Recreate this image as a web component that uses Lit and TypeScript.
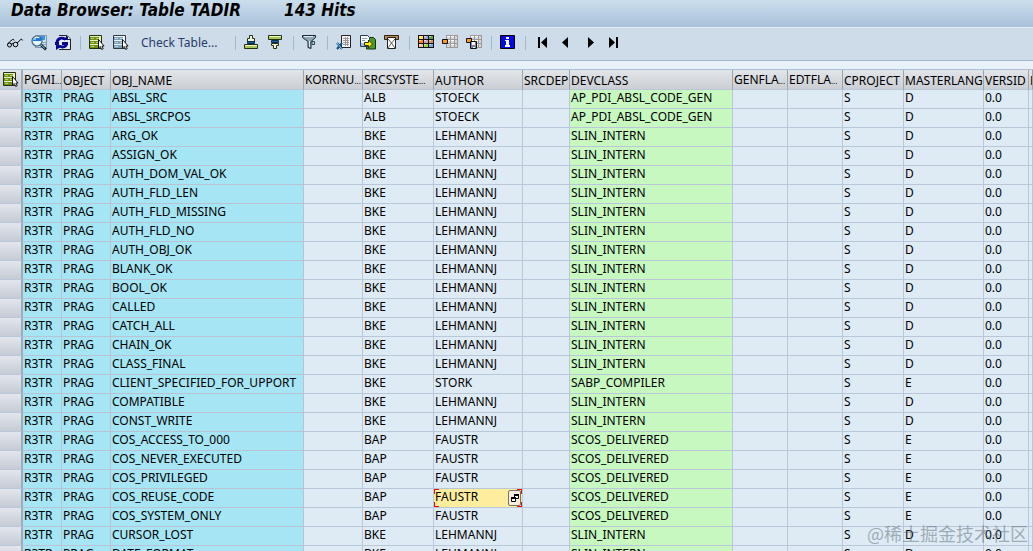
import { LitElement, html, css, svg } from "lit";
import { customElement } from "lit/decorators.js";
import { classMap } from "lit/directives/class-map.js";

interface Column {
  key: string;
  label: string;
  width: number | null;
  tone?: string;
  cut?: boolean;
}

const COLUMNS: Column[] = [
  { key: "pgmid", label: "PGMI", width: 39, tone: "key", cut: true },
  { key: "object", label: "OBJECT", width: 49, tone: "key" },
  { key: "name", label: "OBJ_NAME", width: 193, tone: "key" },
  { key: "korrnum", label: "KORRNU", width: 59, cut: true },
  { key: "system", label: "SRCSYSTE", width: 71, cut: true },
  { key: "author", label: "AUTHOR", width: 89 },
  { key: "srcdep", label: "SRCDEP", width: 47 },
  { key: "devclass", label: "DEVCLASS", width: 163, tone: "link" },
  { key: "genflag", label: "GENFLA", width: 55, cut: true },
  { key: "edtflag", label: "EDTFLA", width: 55, cut: true },
  { key: "project", label: "CPROJECT", width: 61 },
  { key: "lang", label: "MASTERLANG", width: 80 },
  { key: "versid", label: "VERSID", width: 45 },
  { key: "paknocheck", label: "P", width: null },
];

const SLIN = "SLIN_INTERN";
const SCOS = "SCOS_DELIVERED";
const ABSL = "AP_PDI_ABSL_CODE_GEN";

const ENTRIES: string[][] = [
  ["ABSL_SRC", "ALB", "STOECK", ABSL, "D"],
  ["ABSL_SRCPOS", "ALB", "STOECK", ABSL, "D"],
  ["ARG_OK", "BKE", "LEHMANNJ", SLIN, "D"],
  ["ASSIGN_OK", "BKE", "LEHMANNJ", SLIN, "D"],
  ["AUTH_DOM_VAL_OK", "BKE", "LEHMANNJ", SLIN, "D"],
  ["AUTH_FLD_LEN", "BKE", "LEHMANNJ", SLIN, "D"],
  ["AUTH_FLD_MISSING", "BKE", "LEHMANNJ", SLIN, "D"],
  ["AUTH_FLD_NO", "BKE", "LEHMANNJ", SLIN, "D"],
  ["AUTH_OBJ_OK", "BKE", "LEHMANNJ", SLIN, "D"],
  ["BLANK_OK", "BKE", "LEHMANNJ", SLIN, "D"],
  ["BOOL_OK", "BKE", "LEHMANNJ", SLIN, "D"],
  ["CALLED", "BKE", "LEHMANNJ", SLIN, "D"],
  ["CATCH_ALL", "BKE", "LEHMANNJ", SLIN, "D"],
  ["CHAIN_OK", "BKE", "LEHMANNJ", SLIN, "D"],
  ["CLASS_FINAL", "BKE", "LEHMANNJ", SLIN, "D"],
  ["CLIENT_SPECIFIED_FOR_UPPORT", "BKE", "STORK", "SABP_COMPILER", "E"],
  ["COMPATIBLE", "BKE", "LEHMANNJ", SLIN, "D"],
  ["CONST_WRITE", "BKE", "LEHMANNJ", SLIN, "D"],
  ["COS_ACCESS_TO_000", "BAP", "FAUSTR", SCOS, "E"],
  ["COS_NEVER_EXECUTED", "BAP", "FAUSTR", SCOS, "E"],
  ["COS_PRIVILEGED", "BAP", "FAUSTR", SCOS, "E"],
  ["COS_REUSE_CODE", "BAP", "FAUSTR", SCOS, "E"],
  ["COS_SYSTEM_ONLY", "BAP", "FAUSTR", SCOS, "E"],
  ["CURSOR_LOST", "BKE", "LEHMANNJ", SLIN, "D"],
  ["DATE_FORMAT", "BKE", "LEHMANNJ", SLIN, "D"],
];

const ROWS: Record<string, string>[] = ENTRIES.map(([name, system, author, devclass, lang]) => ({
  pgmid: "R3TR",
  object: "PRAG",
  name,
  system,
  author,
  devclass,
  project: "S",
  lang,
  versid: "0.0",
}));

const SELECTED = "COS_REUSE_CODE";

// Drawings share a 16 by 16 pixel grid.
const list = (bar: string, line: string, paper: string) => svg`
  <path fill="${paper}" stroke="${line}" d="M.5.5h12v13H.5z"/>
  <path fill="${bar}" d="M1 2h9v3H1zM1 6h9v3H1zM1 10h9v3H1z"/>
  <path fill="${paper}" opacity=".6" d="M2 3h3v1H2zM2 7h3v1H2zM2 11h3v1H2zM7 3h3v1H7zM7 7h2v1H7z"/>
  <path fill="#fff" stroke="#000" stroke-width=".9" d="M9.500 4.500v8.500l1.800-1.500 1.400 3 1.500-.8-1.300-2.700h2.200z"/>`;

const tableGrid = svg`
  <path fill="#9a9a9a" d="M4 0h12v13H4z"/>
  <path fill="#d6d6d6" d="M5 1h3v3H5zM9 1h3v3H9zM13 1h2v3h-2zM5 5h3v3H5zM9 5h3v3H9zM13 5h2v3h-2zM5 9h3v3H5zM9 9h3v3H9zM13 9h2v3h-2z"/>
  <path fill="#fff" d="M5 1h3v1H5zM9 1h3v1H9zM5 5h3v1H5zM9 5h3v1H9zM9 9h3v1H9z"/>`;

const ICONS: Record<string, unknown> = {
  glasses: svg`
    <g fill="none" stroke="#000"><circle cx="2.500" cy="10" r="2"/><circle cx="8.500" cy="9.500" r="2.300"/>
    <path d="M4.300 9q1-1 2 0M.7 9Q1.500 7.500 5.500 4.500q1-.8 1.500 1M10.300 8l3.500-3.700q1-.8 1.500 1.200"/></g>`,
  search: svg`
    <path fill="#c4e4f8" stroke="#7c96a8" d="M4.500.5h11v12h-11z"/><path fill="#3b95e6" d="M9 1h5v4H9z"/>
    <path stroke="#8fa5b4" d="M10 7.500h5M10 9.500h5"/>
    <circle cx="6" cy="6" r="5" fill="#e6f6fd" stroke="#46637a" stroke-width="1.200"/>
    <path fill="#1f78de" d="M2 3h8v3H2z"/><path fill="#7fc3f4" d="M2 3h3v2H2z"/>
    <path stroke="#0d1f2e" stroke-width="2.800" d="m10 10 5 4.500"/><path stroke="#9bc6dc" d="m10 10 4 3.500"/>`,
  refresh: svg`
    <path fill="#e6ebf1" d="M4 1h8l3 3v10H4z"/><path fill="none" stroke="#222" d="M4 .5h8l3.500 3.500v10.500H4"/><path fill="#fff" stroke="#222" d="M11.500.5v4h4"/>
    <path fill="none" stroke="#06068f" stroke-width="2.800" d="M10.500 4.200C6 2 2 3.500 2 8M4.500 11.300c3.500 1.500 7 .5 7-2.800"/>
    <path fill="#06068f" d="M7 5h6V1zM0 7h4v3H0zM7 7h6v3H7zM1 9l6 2-6 4z"/>`,
  rows: list("#6f9210", "#26300a", "#e9f3c6"),
  rowsPlain: list("#7e9fb4", "#2c3a44", "#edf5fa"),
  ascending: svg`
    <path fill="#f3f6dc" stroke="#26300f" d="M5.500.5h3v3h2v3h-7v-3h2z"/><path fill="#0f65a8" stroke="#0c2c4c" d="M3.500 6.500h7v2h-7z"/>
    <path fill="#a9c757" stroke="#26300f" d="M.5 9.500h13v4H.5z"/><path stroke="#edf7c4" d="M1 10.500h12"/>`,
  descending: svg`
    <path fill="#a9c757" stroke="#26300f" d="M.5.5h13v4H.5z"/><path stroke="#edf7c4" d="M1 1.500h12"/>
    <path fill="#0f65a8" stroke="#0c2c4c" d="M3.500 5.500h7v2h-7z"/><path fill="#f3f6dc" stroke="#26300f" d="M3.500 8.500h7v2h-2v3h-3v-3h-2z"/>`,
  filter: svg`
    <path fill="#8fa6b5" stroke="#1c2730" d="M.5.5h13v2l-4.500 4v7l-3-1v-6l-5.500-4z"/>
    <path fill="#e3eef4" d="M2 1h9v1H2zM7 6h1v6H7z"/><path fill="none" stroke="#23465f" d="M10 6.500h2.500v3H10z"/>`,
  exportSheet: svg`
    <path fill="#f4f4f4" stroke="#222" d="M5.500.5h9v12h-9z"/>
    <path fill="none" stroke="#9a9a9a" d="M7 3.500h6M7 5.500h6M7 7.500h6M7 9.500h6M9.500 2v9M11.500 2v9"/>
    <path stroke="#124f86" stroke-width="2" d="m1 8 5 6M6 8l-5 6"/><path stroke="#8fd0f2" d="m1 8 5 6"/>`,
  exportFile: svg`
    <path fill="#4c9a2b" stroke="#12330f" d="M9.500 2.500h4l2 2v9.500h-9v-4z"/><path fill="#fff" stroke="#263b62" d="M.5.5h7l2 2v9h-9z"/>
    <path fill="#9cc0ee" d="M1 8h5v3H1z"/><path stroke="#7f9dbd" d="M2 3.500h5M2 5.500h3"/>
    <path fill="#ffee1d" stroke="#333600" d="M4.500 7.500h4v-2.500l4 4-4 4v-2.500h-4z"/>`,
  mail: svg`
    <path fill="#b98a52" stroke="#2f2415" d="M.5.500h14v4H.5z"/><path fill="#fff" stroke="#222" d="M3.500 2.500h8v11h-8z"/>
    <path fill="none" stroke="#333" stroke-width=".8" d="m4 4 3.500 4L11 4M4 13l3.500-5 3.500 5"/>`,
  colours: svg`
    <path fill="#111" d="M0 0h16v13H0z"/><path fill="#ffe63e" d="M1 1h4v3H1z"/><path fill="#a99de0" d="M6 1h4v3H6z"/>
    <path fill="#5da83a" d="M11 1h4v3h-4z"/><path fill="#f98a1a" d="M1 5h4v3H1z"/><path fill="#c3a4cf" d="M6 5h4v3H6z"/>
    <path fill="#c59a67" d="M11 5h4v3h-4z"/><path fill="#ffc3a5" d="M1 9h4v3H1z"/><path fill="#96da3e" d="M6 9h4v3H6z"/>
    <path fill="#77a8ed" d="M11 9h4v3h-4z"/><path fill="#fff" opacity=".6" d="M1 1h2v1H1zM6 1h2v1H6zM11 1h2v1h-2zM1 5h2v1H1zM6 5h2v1H6zM11 5h2v1h-2zM1 9h2v1H1zM6 9h2v1H6zM11 9h2v1h-2z"/>`,
  choose: svg`${tableGrid}<path fill="#ff9c10" stroke="#111" d="M.5 4.500h5v4h-5z"/>`,
  save: svg`${tableGrid}<path fill="#ff9c10" stroke="#111" d="M.5 3.500h5v4h-5z"/>
    <path fill="#7c7fa8" stroke="#111" d="M4.500 6.500h6v7h-6z"/><path fill="#fff" d="M6 7h3v3H6zM7 12h2v1H7z"/>`,
  info: svg`
    <path fill="#0707e8" stroke="#000" d="M.5.5h14v13H.5z"/>
    <path fill="#fff" d="M6 2h3v2H6zM5 5h4v5h1v2H5v-2h1V6H5z"/>`,
  first: svg`<path d="M2 2h2v11H2zM11 2v11L5 7.500z"/>`,
  previous: svg`<path d="M8 2v11L2 7.500z"/>`,
  next: svg`<path d="M4 2v11l6-5.500z"/>`,
  last: svg`<path d="M1 2v11l6-5.500zM8 2h2v11H8z"/>`,
  help: svg`<path fill="#fff" stroke="#000" d="M7.500 4.500h4v4h-4zM4.500 7.500h4v4h-4z"/><path d="M7 4h5v2H7zM4 7h5v2H4z"/>`,
};

@customElement("sap-icon")
class SapIcon extends LitElement {
  static properties = { name: {} };
  declare name: string;

  static styles = css`
    :host { display: block; flex: none; width: 16px; height: 16px; }
    svg { display: block; width: 100%; height: 100%; }
  `;

  render() {
    return html`<svg viewBox="0 0 16 16" aria-hidden="true">${ICONS[this.name]}</svg>`;
  }
}

const TOOL_GROUPS: { cls: string; tools: [string, string][] }[] = [
  { cls: "view", tools: [["glasses", "Display"], ["search", "Find"], ["refresh", "Refresh"]] },
  { cls: "rows", tools: [["rows", "Select all"], ["rowsPlain", "Deselect all"]] },
  { cls: "sort", tools: [["ascending", "Sort ascending"], ["descending", "Sort descending"]] },
  { cls: "filter", tools: [["filter", "Filter"]] },
  { cls: "export", tools: [["exportSheet", "Spreadsheet"], ["exportFile", "Local file"], ["mail", "Mail"]] },
  { cls: "layout", tools: [["colours", "Change layout"], ["choose", "Choose layout"], ["save", "Save layout"]] },
  { cls: "info", tools: [["info", "Information"]] },
  { cls: "paging", tools: [["first", "First column"], ["previous", "Previous column"], ["next", "Next column"], ["last", "Last column"]] },
];

@customElement("app-root")
class AppRoot extends LitElement {
  static styles = css`
    :host {
      display: flex;
      flex-direction: column;
      height: 100vh;
      overflow: hidden;
      position: relative;
      background: #deebf5;
      color: #000;
      font: 12px/16px "Noto Sans", sans-serif;
    }
    * { box-sizing: border-box; }
    button { display: block; margin: 0; padding: 0; border: 0; background: none; font: inherit; color: inherit; }
    .title {
      display: flex;
      gap: 43px;
      flex: none;
      height: 27px;
      margin: 0;
      padding: 0 11px;
      background: linear-gradient(#cbdeec, #a9c1da);
      font: italic bold 17px/20px "DejaVu Sans Condensed", "DejaVu Sans", sans-serif;
      white-space: nowrap;
    }
    .toolbar {
      display: flex;
      align-items: center;
      flex: none;
      height: 34px;
      padding: 0 7px 2px;
      background: #cddce8;
      border-top: 1px solid #e4edf4;
      border-bottom: 1px solid #a5b8ca;
    }
    .group { display: flex; align-items: center; gap: 8px; height: 14px; }
    .group + .group { margin-left: 9px; padding-left: 8px; border-left: 1px solid #9fb9d3; }
    .group.paging { padding-left: 10px; }
    .check { padding: 0 9px 0 4px; color: #2b3a69; }
    .band { flex: none; height: 9px; background: #e8f0f8; border-bottom: 1px solid #adbfd2; }
    .grid { flex: 1; min-height: 0; overflow: hidden; }
    table { width: 100%; table-layout: fixed; border-collapse: separate; border-spacing: 0; }
    th, td {
      height: 19px;
      padding: 0 0 2px 1px;
      border-right: 1px solid #b9c7d8;
      border-bottom: 1px solid #b9c7d8;
      font-weight: normal;
      text-align: left;
      vertical-align: middle;
      white-space: nowrap;
      overflow: hidden;
    }
    th {
      height: 20px;
      padding: 2px 0 0 1px;
      background: linear-gradient(#e2e5e9, #cbcfd4);
      border-right-color: #98a5b3;
    }
    .dots { font-size: 8px; }
    .key { background: #a6e5f4; border-color: #b8c3d4; }
    .link { background: #c7f8c0; }
    th:first-child, td:first-child {
      padding: 1px 0 0 3px;
      border-right: 2px solid #9dabbc;
      background: linear-gradient(#e2e6ec, #c6ccd5);
    }
    td.selected { padding: 0; }
    .cell {
      --h: linear-gradient(#e80c0c, #e80c0c);
      display: flex;
      justify-content: space-between;
      height: 18px;
      padding: 0 1px;
      background:
        var(--h) 0 0 / 5px 1px, var(--h) 0 0 / 1px 5px,
        var(--h) 100% 0 / 5px 1px, var(--h) 100% 0 / 1px 5px,
        var(--h) 0 100% / 5px 1px, var(--h) 0 100% / 1px 5px,
        var(--h) 100% 100% / 5px 1px, var(--h) 100% 100% / 1px 5px,
        #ffed9e;
      background-repeat: no-repeat;
    }
    .help {
      display: flex;
      align-items: center;
      justify-content: center;
      align-self: center;
      width: 13px;
      height: 16px;
      border: 1px solid #77736a;
      border-radius: 2px;
      background: #f3efdc;
      overflow: hidden;
    }
    .watermark {
      position: absolute;
      right: 5px;
      bottom: 5px;
      font: 18px/26px "Noto Sans CJK SC", sans-serif;
      color: rgba(95, 105, 115, 0.5);
      white-space: nowrap;
    }
  `;

  renderCell(column: Column, row: Record<string, string>) {
    if (column.key === "author" && row.name === SELECTED) {
      return html`<td class="selected"><div class="cell"><span>${row.author}</span>
        <button class="help" aria-label="Possible values"><sap-icon name="help"></sap-icon></button></div></td>`;
    }
    return html`<td class=${column.tone ?? ""}>${row[column.key] ?? ""}</td>`;
  }

  render() {
    return html`
      <h1 class="title"><span>Data Browser: Table TADIR</span><span>143 Hits</span></h1>
      <div class="toolbar">
        ${TOOL_GROUPS.map(({ cls, tools }) => html`
          <div class=${classMap({ group: true, [cls]: true })}>
            ${tools.map(([icon, label]) => html`<button aria-label=${label}><sap-icon name=${icon}></sap-icon></button>`)}
            ${cls === "rows" ? html`<button class="check">Check Table...</button>` : ""}
          </div>`)}
      </div>
      <div class="band"></div>
      <div class="grid">
        <table>
          <colgroup>
            <col style="width:23px">
            ${COLUMNS.map((c) => html`<col style=${c.width ? `width:${c.width}px` : ""}>`)}
          </colgroup>
          <thead>
            <tr>
              <th><button aria-label="Select all rows"><sap-icon name="rows"></sap-icon></button></th>
              ${COLUMNS.map((c) => html`<th>${c.label}${c.cut ? html`<span class="dots">...</span>` : ""}</th>`)}
            </tr>
          </thead>
          <tbody>
            ${ROWS.map((row) => html`<tr><td></td>${COLUMNS.map((c) => this.renderCell(c, row))}</tr>`)}
          </tbody>
        </table>
      </div>
      <div class="watermark">@稀土掘金技术社区</div>
    `;
  }
}
